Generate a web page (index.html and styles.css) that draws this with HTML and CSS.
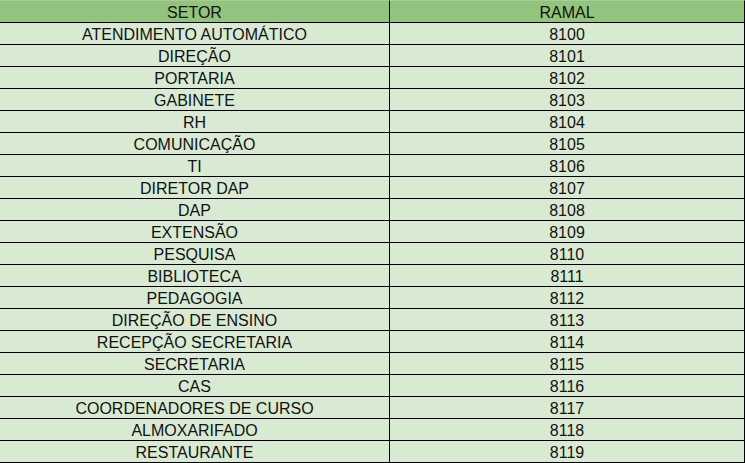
FILE: index.html
```html
<!DOCTYPE html>
<html lang="pt-BR">
<head>
<meta charset="utf-8">
<title>Ramais</title>
<link rel="stylesheet" href="styles.css">
</head>
<body>
<table class="ramais">
  <thead>
    <tr><th class="c1">SETOR</th><th class="c2">RAMAL</th></tr>
  </thead>
  <tbody>
    <tr><td class="c1">ATENDIMENTO AUTOMÁTICO</td><td class="c2">8100</td></tr>
    <tr><td class="c1">DIREÇÃO</td><td class="c2">8101</td></tr>
    <tr><td class="c1">PORTARIA</td><td class="c2">8102</td></tr>
    <tr><td class="c1">GABINETE</td><td class="c2">8103</td></tr>
    <tr><td class="c1">RH</td><td class="c2">8104</td></tr>
    <tr><td class="c1">COMUNICAÇÃO</td><td class="c2">8105</td></tr>
    <tr><td class="c1">TI</td><td class="c2">8106</td></tr>
    <tr><td class="c1">DIRETOR DAP</td><td class="c2">8107</td></tr>
    <tr><td class="c1">DAP</td><td class="c2">8108</td></tr>
    <tr><td class="c1">EXTENSÃO</td><td class="c2">8109</td></tr>
    <tr><td class="c1">PESQUISA</td><td class="c2">8110</td></tr>
    <tr><td class="c1">BIBLIOTECA</td><td class="c2">8111</td></tr>
    <tr><td class="c1">PEDAGOGIA</td><td class="c2">8112</td></tr>
    <tr><td class="c1">DIREÇÃO DE ENSINO</td><td class="c2">8113</td></tr>
    <tr><td class="c1">RECEPÇÃO SECRETARIA</td><td class="c2">8114</td></tr>
    <tr><td class="c1">SECRETARIA</td><td class="c2">8115</td></tr>
    <tr><td class="c1">CAS</td><td class="c2">8116</td></tr>
    <tr><td class="c1">COORDENADORES DE CURSO</td><td class="c2">8117</td></tr>
    <tr><td class="c1">ALMOXARIFADO</td><td class="c2">8118</td></tr>
    <tr><td class="c1">RESTAURANTE</td><td class="c2">8119</td></tr>
  </tbody>
</table>
</body>
</html>
```
FILE: styles.css
```css
html, body {
  margin: 0;
  padding: 0;
  background: #d9ead3;
}

.ramais {
  border-collapse: separate;
  border-spacing: 0;
  table-layout: fixed;
  width: 745px;
  font-family: "Liberation Sans", Arial, sans-serif;
  font-size: 16px;
  color: #111;
}

.ramais th,
.ramais td {
  padding: 2px 0 0;
  height: 19px;
  line-height: 19px;
  text-align: center;
  font-weight: normal;
  border-bottom: 1px solid #000;
  white-space: nowrap;
  overflow: hidden;
}

.ramais th {
  background: #93c47d;
  border-top: 1px solid #a5cf92;
}

.ramais td {
  background: #d9ead3;
}

.ramais .c1 {
  width: 389px;
  border-right: 1px solid #000;
}

.ramais .c2 {
  width: 354px;
  border-right: 1px solid #000;
}
```
